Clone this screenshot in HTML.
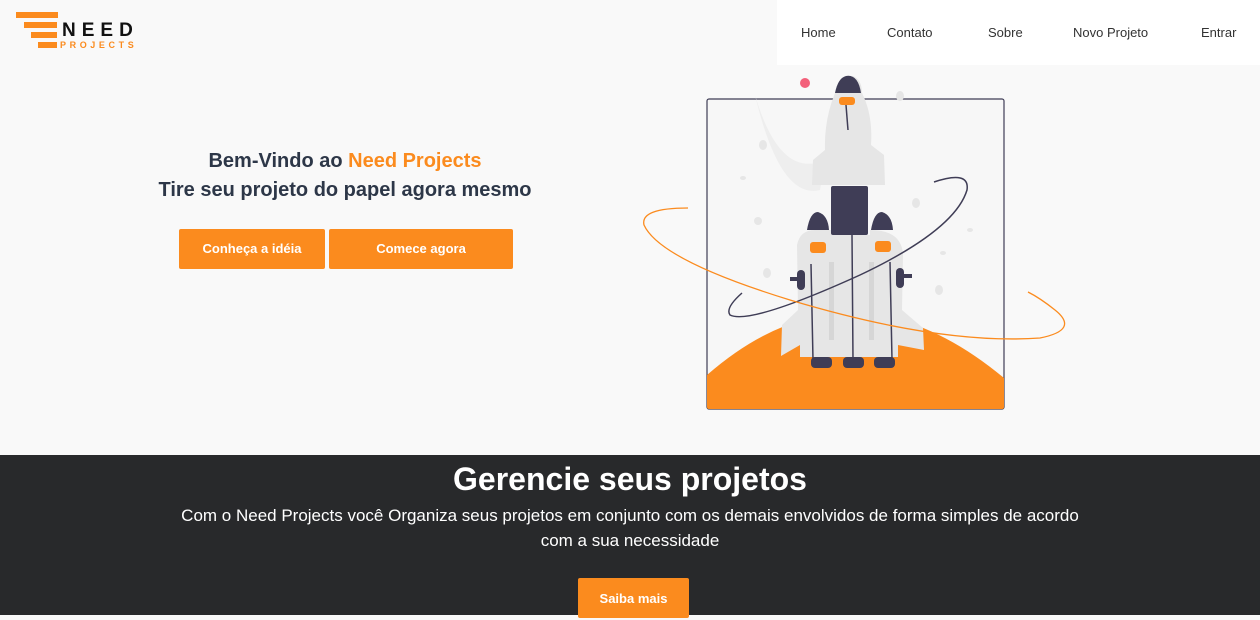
<!DOCTYPE html>
<html><head><meta charset="utf-8"><style>
*{margin:0;padding:0;box-sizing:border-box}
body{width:1260px;height:615px;overflow:hidden;background:#f9f9f9;font-family:"Liberation Sans",sans-serif;position:relative}
.nav{position:absolute;left:777px;top:0;width:483px;height:65px;background:#fff}
.nav span{position:absolute;top:25px;font-size:13px;color:#333}
.h{position:absolute;left:120px;width:450px;text-align:center;font-weight:bold;font-size:20px;color:#2d3748}
.btn{position:absolute;top:229px;height:40px;background:#fb8b1e;color:#fff;font-weight:bold;font-size:13px;text-align:center;line-height:40px;border-radius:2px}
.dark{position:absolute;left:0;top:455px;width:1260px;height:160px;background:#28292b;color:#fff;text-align:center}
</style></head><body>
<svg style="position:absolute;left:0;top:0" width="160" height="60">
<rect x="16" y="12" width="42" height="6" fill="#fb8b1e"/>
<rect x="24" y="22" width="33" height="6" fill="#fb8b1e"/>
<rect x="31" y="32" width="26" height="6" fill="#fb8b1e"/>
<rect x="38" y="42" width="19" height="6" fill="#fb8b1e"/>
<text x="62" y="36" font-family="Liberation Sans" font-weight="bold" font-size="19" letter-spacing="6" fill="#111">NEED</text>
<text x="60" y="48" font-family="Liberation Sans" font-weight="bold" font-size="9" letter-spacing="3.6" fill="#fb8b1e">PROJECTS</text>
</svg>
<div class="nav"><span style="left:24px">Home</span><span style="left:110px">Contato</span><span style="left:211px">Sobre</span><span style="left:296px">Novo Projeto</span><span style="left:424px">Entrar</span></div>
<div class="h" style="top:150px">Bem-Vindo ao <span style="color:#fb8b1e">Need Projects</span></div>
<div class="h" style="top:179px">Tire seu projeto do papel agora mesmo</div>
<div class="btn" style="left:179px;width:146px">Conheça a idéia</div>
<div class="btn" style="left:329px;width:184px">Comece agora</div>
<svg style="position:absolute;left:640px;top:60px" width="430" height="360">
<rect x="67" y="39" width="297" height="310" rx="2" fill="#f7f7f7" stroke="#3f3d56" stroke-width="1.2"/>
<path d="M67 315 Q210 190 364 318 L364 347 Q364 349 362 349 L69 349 Q67 349 67 347Z" fill="#fb8b1e"/>
<path d="M115 35 Q140 120 185 100 L180 130 Q140 140 115 35Z" fill="#eee"/>
<circle cx="165" cy="23" r="5" fill="#f3607a"/>
<ellipse cx="260" cy="36" rx="4" ry="5" fill="#e6e6e6"/>
<ellipse cx="123" cy="85" rx="4" ry="5" fill="#e6e6e6"/><ellipse cx="118" cy="161" rx="4" ry="4" fill="#e6e6e6"/><ellipse cx="276" cy="143" rx="4" ry="5" fill="#e6e6e6"/><ellipse cx="127" cy="213" rx="4" ry="5" fill="#e6e6e6"/><ellipse cx="299" cy="230" rx="4" ry="5" fill="#e6e6e6"/><ellipse cx="103" cy="118" rx="3" ry="2" fill="#e6e6e6"/><ellipse cx="330" cy="170" rx="3" ry="2" fill="#e6e6e6"/><ellipse cx="303" cy="193" rx="3" ry="2" fill="#e6e6e6"/>
<path d="M213 16 Q198 20 195 33 Q184 60 185 90 L173 100 L172 125 L245 125 L244 95 L231 85 Q233 55 222 33 Q222 20 213 16Z" fill="#e6e6e6"/>
<path d="M195 33 Q198 18 206 16 Q218 14 221 33Z" fill="#3f3d56"/>
<rect x="199" y="37" width="16" height="8" rx="3" fill="#fb8b1e"/>
<path d="M206 45 L208 70" stroke="#3f3d56" stroke-width="1.5"/>
<path d="M157 185 Q160 170 175 170 L192 170 L192 175 L230 175 L230 170 Q262 170 263 195 L262 250 L283 268 L284 290 L258 285 L258 297 L160 297 L160 285 L141 296 L142 265 L158 250Z" fill="#e6e6e6"/>
<path d="M167 170 Q170 152 178 152 Q188 155 189 170Z" fill="#3f3d56"/><path d="M231 170 Q234 152 242 152 Q252 155 253 170Z" fill="#3f3d56"/>
<rect x="191" y="126" width="37" height="49" rx="2" fill="#3f3d56"/>
<rect x="170" y="182" width="16" height="11" rx="3" fill="#fb8b1e"/><rect x="235" y="181" width="16" height="11" rx="3" fill="#fb8b1e"/>
<rect x="189" y="202" width="5" height="78" fill="#d6d6d6"/><rect x="229" y="202" width="5" height="78" fill="#d6d6d6"/>
<path d="M171 204 L173 300 M212 175 L213 300 M250 202 L252 300" stroke="#3f3d56" stroke-width="1.5"/>
<rect x="157" y="210" width="8" height="20" rx="4" fill="#3f3d56"/><rect x="150" y="217" width="10" height="4" fill="#3f3d56"/>
<rect x="256" y="208" width="8" height="20" rx="4" fill="#3f3d56"/><rect x="262" y="214" width="10" height="4" fill="#3f3d56"/>
<rect x="171" y="297" width="21" height="11" rx="4" fill="#3f3d56"/><rect x="203" y="297" width="21" height="11" rx="4" fill="#3f3d56"/><rect x="234" y="297" width="21" height="11" rx="4" fill="#3f3d56"/>
<path d="M294 122 Q330 110 327 130 Q315 170 220 215 Q110 265 90 255 Q85 248 102 233" fill="none" stroke="#3f3d56" stroke-width="1.5"/>
<path d="M48 148 Q0 148 4 165 Q20 200 150 240 Q300 285 400 278 Q440 270 415 250 Q400 238 388 232" fill="none" stroke="#fb8b1e" stroke-width="1.3"/>
</svg>
<div class="dark">
<div style="font-weight:bold;font-size:32px;margin-top:6px">Gerencie seus projetos</div>
<div style="font-size:17px;line-height:25px;width:900px;margin:5px auto 0">Com o Need Projects você Organiza seus projetos em conjunto com os demais envolvidos de forma simples de acordo com a sua necessidade</div>
<div style="position:absolute;left:578px;top:123px;width:111px;height:40px;background:#fb8b1e;border-radius:2px;font-weight:bold;font-size:13px;line-height:42px">Saiba mais</div>
</div>
</body></html>
